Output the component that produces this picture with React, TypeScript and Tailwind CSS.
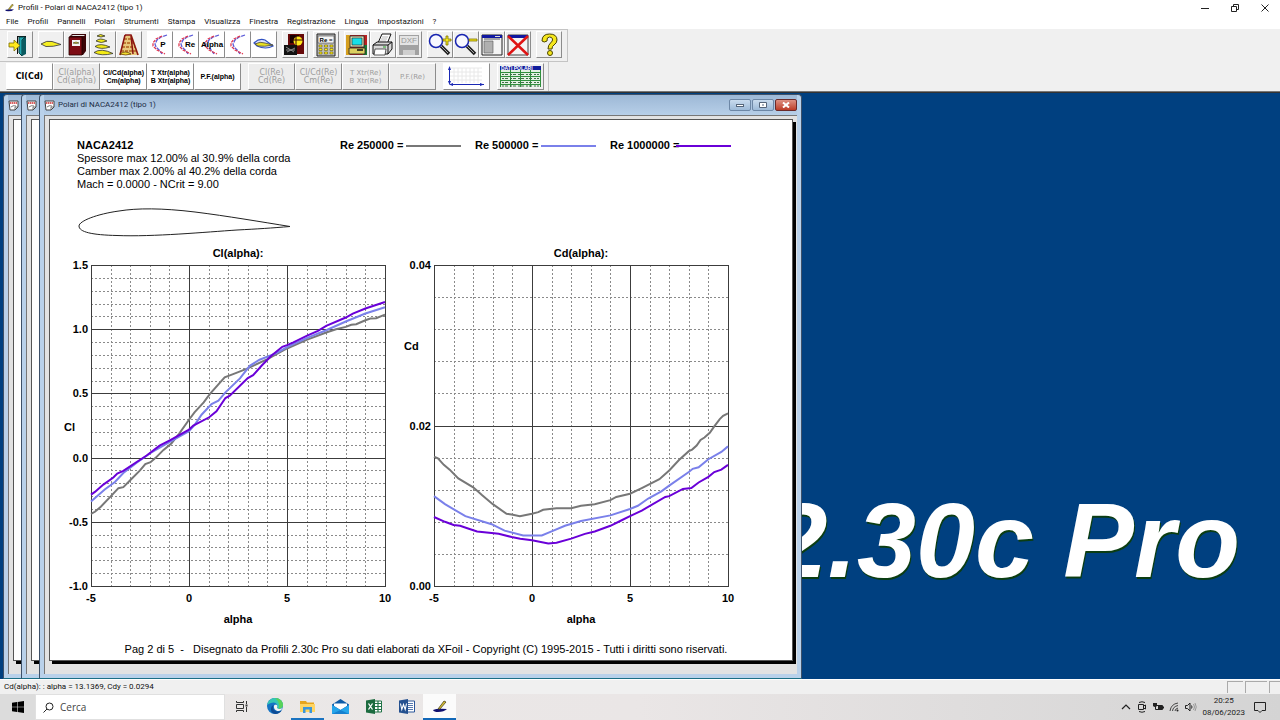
import React from 'react';

type Point = [number, number];

const curveColors = ['#777777', '#7a80ea', '#6a00d8'];

const clCurves: Point[][] = [
  [[-5, -0.438], [-4.8, -0.422], [-4.5, -0.383], [-4.03, -0.308], [-3.6, -0.238], [-3.35, -0.23], [-3, -0.176], [-2.5, -0.1], [-2.23, -0.05], [-1.96, -0.036], [-1.69, 0], [-1.3, 0.06], [-0.9, 0.11], [-0.5, 0.187], [0, 0.295], [0.28, 0.352], [0.75, 0.43], [1.06, 0.495], [1.5, 0.57], [1.82, 0.625], [2.25, 0.65], [3, 0.695], [4, 0.767], [5, 0.85], [6, 0.917], [7, 0.974], [7.5, 1], [8, 1.018], [8.28, 1.034], [8.53, 1.039], [9, 1.07], [9.25, 1.083], [9.55, 1.085], [10, 1.114]],
  [[-5, -0.342], [-4.3, -0.249], [-3.78, -0.19], [-3.35, -0.12], [-2.67, -0.04], [-1.96, 0.036], [-0.98, 0.122], [0, 0.205], [0.3, 0.257], [0.64, 0.334], [1.15, 0.417], [1.5, 0.443], [1.86, 0.508], [2.6, 0.617], [3.1, 0.715], [3.6, 0.762], [4.46, 0.813], [5, 0.86], [6, 0.93], [7, 0.992], [8, 1.06], [9, 1.122], [10, 1.171]],
  [[-5, -0.288], [-4.8, -0.267], [-4.37, -0.21], [-3.86, -0.155], [-3.66, -0.124], [-3.35, -0.104], [-2.67, -0.034], [-2.16, 0.016], [-1.5, 0.093], [-0.98, 0.135], [0, 0.218], [0.22, 0.249], [1.03, 0.314], [1.4, 0.36], [1.86, 0.464], [2.08, 0.482], [3, 0.619], [3.27, 0.642], [3.7, 0.715], [4.2, 0.793], [4.76, 0.863], [5, 0.876], [5.3, 0.896], [6, 0.948], [6.58, 0.987], [7, 1.026], [8, 1.091], [8.36, 1.122], [9, 1.161], [10, 1.212]],
];

const cdCurves: Point[][] = [
  [[-5, 0.0161], [-4.8, 0.0159], [-4.5, 0.0151], [-4.2, 0.0145], [-3.76, 0.0134], [-3, 0.0123], [-2.54, 0.0113], [-2, 0.0102], [-1.3, 0.009], [-1.04, 0.0089], [-0.62, 0.0087], [0, 0.009], [0.32, 0.0092], [0.57, 0.0095], [1.25, 0.0097], [2, 0.0097], [2.5, 0.01], [3.2, 0.0102], [4, 0.0107], [4.3, 0.0111], [5, 0.0115], [5.6, 0.0122], [6.5, 0.0133], [7, 0.0144], [7.5, 0.0157], [8, 0.0168], [8.17, 0.017], [8.4, 0.0175], [8.6, 0.0182], [8.8, 0.0185], [9.07, 0.0191], [9.3, 0.0199], [9.58, 0.0208], [9.75, 0.0212], [10, 0.0215]],
  [[-5, 0.0112], [-4.44, 0.0102], [-3.4, 0.0087], [-2.06, 0.0077], [-1.4, 0.0069], [-0.45, 0.0063], [0.5, 0.0063], [1, 0.0068], [1.68, 0.0075], [2.5, 0.0081], [4, 0.0088], [5, 0.0096], [5.4, 0.01], [5.93, 0.0109], [6.6, 0.0118], [7, 0.0125], [8, 0.0142], [8.2, 0.0146], [8.5, 0.0148], [9, 0.0158], [9.66, 0.0167], [10, 0.0174]],
  [[-5, 0.0086], [-4.44, 0.008], [-4, 0.0076], [-3.67, 0.0075], [-3.3, 0.0072], [-2.8, 0.0068], [-1.7, 0.0065], [-1.04, 0.0061], [-0.6, 0.0059], [0, 0.0057], [0.83, 0.0053], [1.25, 0.0054], [2, 0.0059], [2.7, 0.0065], [3.2, 0.0068], [4, 0.0075], [4.5, 0.0081], [5, 0.0087], [5.6, 0.0094], [6.8, 0.0111], [7, 0.0112], [7.7, 0.0121], [8.13, 0.0122], [8.5, 0.0129], [9, 0.0136], [9.3, 0.0142], [9.66, 0.0145], [10, 0.0151]],
];

interface ChartProps {
  title: string;
  axis: string;
  axisX: number;
  axisY: number;
  min: number;
  max: number;
  major: number;
  minor: number;
  digits: number;
  curves: Point[][];
}

const Chart: React.FC<ChartProps> = ({ title, axis, axisX, axisY, min, max, major, minor, digits, curves }) => {
  const left = 34;
  const top = 22;
  const width = 294;
  const height = 321;
  const px = (a: number) => left + ((a + 5) / 15) * width;
  const py = (v: number) => top + ((max - v) / (max - min)) * height;
  const snap = (n: number) => Math.round(n) + 0.5;
  const range = (from: number, to: number, step: number) =>
    Array.from({ length: Math.round((to - from) / step) + 1 }, (_, i) => from + i * step);

  return (
    <svg
      width="343"
      height="388"
      viewBox="0 0 343 388"
      role="img"
      aria-label={title}
      className="shrink-0 font-['Liberation_Sans',sans-serif] text-[11px] font-bold"
    >
      <text x={left + width / 2} y="14" textAnchor="middle">{title}</text>
      <g stroke="#8a8a8a" strokeWidth="1" strokeDasharray="2 2">
        {range(-5, 10, 1).map((a) => (
          <line key={a} x1={snap(px(a))} x2={snap(px(a))} y1={top} y2={top + height} />
        ))}
        {range(min, max, minor).map((v) => (
          <line key={v} x1={left} x2={left + width} y1={snap(py(v))} y2={snap(py(v))} />
        ))}
      </g>
      <g stroke="#3c3c3c" strokeWidth="1">
        {range(-5, 10, 5).map((a) => (
          <line key={a} x1={snap(px(a))} x2={snap(px(a))} y1={top} y2={top + height + 1} />
        ))}
        {range(min, max, major).map((v) => (
          <line key={v} x1={left} x2={left + width + 1} y1={snap(py(v))} y2={snap(py(v))} />
        ))}
      </g>
      {curves.map((curve, i) => (
        <polyline
          key={i}
          points={curve.map(([a, v]) => `${px(a)},${py(v)}`).join(' ')}
          fill="none"
          stroke={curveColors[i]}
          strokeWidth="2"
        />
      ))}
      {range(min, max, major).map((v) => (
        <text key={v} x={left - 3} y={Math.round(py(v)) + 4} textAnchor="end">{v.toFixed(digits)}</text>
      ))}
      {range(-5, 10, 5).map((a) => (
        <text key={a} x={px(a)} y={top + height + 16} textAnchor="middle">{a}</text>
      ))}
      <text x={left + width / 2} y={top + height + 37} textAnchor="middle">alpha</text>
      <text x={axisX} y={axisY}>{axis}</text>
    </svg>
  );
};

const Icon: React.FC<{ children: React.ReactNode }> = ({ children }) => (
  <svg width="24" height="24" viewBox="0 0 24 24" aria-hidden="true">{children}</svg>
);

const Polar = () => (
  <g fill="none" strokeWidth="1.3">
    <path d="M19 2 L13 4 L9 7 L7 11 L8 14 L12 18 L14 21" stroke="#5a5ad8" strokeDasharray="4 1" />
    <path d="M14 3 L8 6 L5 10 L5 13 L9 17 L17 21" stroke="#e03850" strokeDasharray="3 1" />
  </g>
);

const PolarLabel: React.FC<{ text: string; x: number }> = ({ text, x }) => (
  <Icon>
    <Polar />
    <text x={x} y="14" textAnchor="middle" className="font-['Liberation_Sans',sans-serif] text-[8px] font-bold">{text}</text>
  </Icon>
);

const DoorIcon = () => (
  <Icon>
    <path d="M9 3h9v18H9z" fill="#111" />
    <path d="M10 4h6v17h-6z" fill="#fff" />
    <path d="M11 4h6l-3 3v16l-3-3z" fill="#20a8b0" stroke="#053c40" strokeWidth="1" />
    <path d="M14 7l4-3v17l-4 2z" fill="#0b5a60" />
    <path d="M1 10h5V7l6 5.5L6 18v-4H1z" fill="#ffe91c" stroke="#7b6c00" strokeWidth=".8" />
  </Icon>
);

const FoilIcon = () => (
  <Icon>
    <path d="M2 11 Q8 7 13 8.5 L22 11.5 Q14 14 7 13.5 Z" fill="#f5ee20" stroke="#444" strokeWidth=".9" />
  </Icon>
);

const BookIcon = () => (
  <Icon>
    <path d="M4 4l3-3h14v17l-3 4H4z" fill="#3c0508" />
    <path d="M6 3h13l1-1H8z" fill="#e6e6e6" />
    <path d="M4 4h13v18H4z" fill="#7d0c14" stroke="#220000" strokeWidth=".8" />
    <path d="M7 7h8v6H7z" fill="#f5f5f5" />
    <path d="M8 10q3-2 6 0q-3 1-6 0z" fill="#e8d820" stroke="#222" strokeWidth=".5" />
  </Icon>
);

const FoilStackIcon = () => (
  <Icon>
    <g fill="#f3ea14" stroke="#333" strokeWidth=".8">
      <path d="M6 3q3-3 8 0q-4 2-8 0z" />
      <path d="M5 8q4-4 11 0q-6 3-11 0z" />
      <path d="M4 13.500q5-4 15 .5q-9 3-15-.5z" />
      <path d="M3 19.500q7-5 19 1q-12 3-19-1z" />
    </g>
  </Icon>
);

const WingIcon = () => (
  <Icon>
    <path d="M8 2h7l7 20H2z" fill="#e8c87c" />
    <path d="M4 18h15M5 14h13M6 10h11M7 6h9" stroke="#b0601c" strokeWidth="1.5" strokeDasharray="3 1" />
    <path d="M8 2L3 22M8 2h6l7 20M14 3l2 18" fill="none" stroke="#8a1414" strokeWidth="1.5" />
    <path d="M3 21q5-4 11 0q-5 2-11 0z" fill="#f0dc30" stroke="#5b3000" strokeWidth=".7" />
  </Icon>
);

const CompareIcon = () => (
  <Icon>
    <path d="M2 10Q7 5 13 7L21 13Q14 17 5 13Z" fill="#dfe4ff" stroke="#3050c0" strokeWidth="1.2" />
    <path d="M3 11Q8 8 13 10L21 12Q12 14 6 13Z" fill="#e8e020" stroke="#444" strokeWidth=".8" />
  </Icon>
);

const PresentIcon = () => (
  <Icon>
    <path d="M5 1h16v20H5z" fill="#650808" />
    <path d="M7 2h9v8H7z" fill="#180000" />
    <circle cx="15" cy="8" r="4.5" fill="#ffe818" />
    <path d="M13 2v10M8 7h12" stroke="#350505" strokeWidth="1" />
    <path d="M1 12h13v10H1z" fill="#111" />
    <path d="M3 14l8 5M4 19l8-4M3 17h9" stroke="#888" strokeWidth="1" />
  </Icon>
);

const CalcIcon = () => (
  <Icon>
    <path d="M3 1h18v22H3z" fill="#bdbdbd" stroke="#222" strokeWidth="1" />
    <path d="M4 3h16v7H4z" fill="#f5f5f5" stroke="#444" strokeWidth=".6" />
    <text x="12" y="9" textAnchor="middle" className="font-['Liberation_Sans',sans-serif] text-[6px] font-bold">Re =</text>
    <path d="M5 12h3v2H5zM10.500 12h3v2h-3zM16 12h3v2h-3zM5 15.500h3v2H5zM10.500 15.500h3v2h-3zM16 15.500h3v2h-3zM5 19h3v2H5zM10.500 19h3v2h-3zM16 19h3v2h-3z" fill="#ffee1a" stroke="#554a00" strokeWidth=".5" />
  </Icon>
);

const ComputerIcon = () => (
  <Icon>
    <path d="M1 2h21v20H1z" fill="#b92020" />
    <path d="M1 2h4v20H1z" fill="#d6a020" />
    <path d="M18 12h4v10h-4z" fill="#1c7a35" />
    <path d="M5 3h14v11H5z" fill="#dcdcb4" stroke="#222" strokeWidth=".8" />
    <path d="M7 5h10v7H7z" fill="#18e0e8" stroke="#222" strokeWidth=".6" />
    <path d="M4 15h16v6H4z" fill="#dccf60" stroke="#222" strokeWidth=".8" />
    <path d="M12 17h6" stroke="#111" strokeWidth="1.5" />
  </Icon>
);

const PrinterIcon = () => (
  <Icon>
    <path d="M7 10L11 1h9l-4 10z" fill="#fff" stroke="#111" strokeWidth="1" />
    <path d="M11 4h6M10 6h6M9 8h6" stroke="#999" strokeWidth=".7" />
    <path d="M2 12l4-3h15v7l-4 5H2z" fill="#d8d8d8" stroke="#111" strokeWidth="1" />
    <path d="M2 12h15v9M17 12l4-3" fill="none" stroke="#111" strokeWidth="1" />
    <path d="M4 16h11l-1 6H3z" fill="#fff" stroke="#333" strokeWidth=".8" />
    <path d="M12 14h3" stroke="#20a020" strokeWidth="1" />
  </Icon>
);

const DxfIcon = () => (
  <Icon>
    <path d="M2 2h20v20H2z" fill="#a2a2a2" />
    <path d="M3 3h18v9H3z" fill="#e4e4e4" />
    <path d="M6 17h12v5H6z" fill="#cfcfcf" />
    <text x="12" y="10" textAnchor="middle" fill="#999" className="font-['Liberation_Sans',sans-serif] text-[8px]">DXF</text>
  </Icon>
);

const ZoomIcon: React.FC<{ plus?: boolean }> = ({ plus }) => (
  <Icon>
    <path d="M13 13l8 8" stroke="#222" strokeWidth="3.500" />
    <path d="M13 13l7 7" stroke="#aaa" strokeWidth="1" />
    <circle cx="8" cy="8" r="6.500" fill="#f8f8ff" stroke="#1824b0" strokeWidth="1.500" />
    <path d={plus ? 'M15 6h3V3h2v3h3v2h-3v4h-2V8h-3z' : 'M15 6h8v2h-8z'} fill="#f3e71c" stroke="#807400" strokeWidth=".8" />
  </Icon>
);

const WindowIcon = () => (
  <Icon>
    <path d="M2 2h20v20H2z" fill="#f4f4f4" stroke="#222" strokeWidth="1" />
    <path d="M2 2h20v3H2z" fill="#1018a0" />
    <path d="M4 8h9v12H4z" fill="#b0b0b0" stroke="#555" strokeWidth=".6" />
    <path d="M4 6h16" stroke="#555" strokeWidth="1" />
    <path d="M15 3.500h5" stroke="#ddd" strokeWidth="1" />
  </Icon>
);

const CloseAllIcon = () => (
  <Icon>
    <path d="M2 2h20v20H2z" fill="#f4f4f4" stroke="#444" strokeWidth="1" />
    <path d="M2 2h20v3H2z" fill="#1018a0" />
    <path d="M2 3l20 19M22 3L2 22" stroke="#e01414" strokeWidth="2.500" />
  </Icon>
);

const HelpIcon = () => (
  <Icon>
    <path d="M5 8Q5 1 12.500 1Q20 1 20 7Q20 10 17 12Q15 13 15 16H11Q11 12 13.500 10Q16 8 15.500 6Q15 4 12.500 4Q9.500 4 10 8Q7 10 5 8z" fill="#f5e61c" stroke="#4a4500" strokeWidth="1" />
    <circle cx="13" cy="20" r="2.500" fill="#f5e61c" stroke="#4a4500" strokeWidth="1" />
  </Icon>
);

const mainTools: { label: string; icon: React.ReactNode; white?: boolean; disabled?: boolean }[][] = [
  [{ label: 'Esci', icon: <DoorIcon /> }],
  [
    { label: 'Profilo', icon: <FoilIcon /> },
    { label: 'Archivio', icon: <BookIcon /> },
    { label: 'Serie di profili', icon: <FoilStackIcon /> },
    { label: 'Centine', icon: <WingIcon /> },
  ],
  [
    { label: 'Polari', icon: <PolarLabel text="P" x={15} />, white: true },
    { label: 'Polari per Re', icon: <PolarLabel text="Re" x={16} />, white: true },
    { label: 'Polari per alpha', icon: <PolarLabel text="Alpha" x={12} />, white: true },
    { label: 'Polare', icon: <Icon><Polar /></Icon>, white: true },
    { label: 'Confronta', icon: <CompareIcon />, white: true },
  ],
  [{ label: 'Presentazione', icon: <PresentIcon /> }],
  [{ label: 'Calcola Re', icon: <CalcIcon /> }],
  [
    { label: 'Schermo', icon: <ComputerIcon /> },
    { label: 'Stampa', icon: <PrinterIcon /> },
    { label: 'Esporta DXF', icon: <DxfIcon />, disabled: true },
  ],
  [
    { label: 'Ingrandisci', icon: <ZoomIcon plus /> },
    { label: 'Riduci', icon: <ZoomIcon /> },
    { label: 'Finestra', icon: <WindowIcon /> },
    { label: 'Chiudi tutto', icon: <CloseAllIcon /> },
  ],
  [{ label: 'Aiuto', icon: <HelpIcon /> }],
];

const toolBorder = 'border border-t-white border-l-white border-r-[#8c8c8c] border-b-[#8c8c8c]';

const graphTools = [
  [
    { lines: ['Cl(Cd)'], style: "bg-white text-black font-bold text-[8px] font-['DejaVu_Sans',sans-serif]" },
    { lines: ['Cl(alpha)', 'Cd(alpha)'], style: "bg-[#ececec] text-[#9c9c9c] text-[8px] font-['DejaVu_Sans',sans-serif]", disabled: true },
    { lines: ['Cl/Cd(alpha)', 'Cm(alpha)'], style: "bg-white text-black font-bold text-[7px] font-['Liberation_Sans',sans-serif]" },
    { lines: ['T Xtr(alpha)', 'B Xtr(alpha)'], style: "bg-white text-black font-bold text-[7px] font-['Liberation_Sans',sans-serif]" },
    { lines: ['P.F.(alpha)'], style: "bg-white text-black font-bold text-[7px] font-['Liberation_Sans',sans-serif]" },
  ],
  [
    { lines: ['Cl(Re)', 'Cd(Re)'], style: "bg-[#ececec] text-[#9c9c9c] text-[8px] font-['DejaVu_Sans',sans-serif]", disabled: true },
    { lines: ['Cl/Cd(Re)', 'Cm(Re)'], style: "bg-[#ececec] text-[#9c9c9c] text-[8px] font-['DejaVu_Sans',sans-serif]", disabled: true },
    { lines: ['T Xtr(Re)', 'B Xtr(Re)'], style: "bg-[#ececec] text-[#9c9c9c] text-[7px] font-['DejaVu_Sans',sans-serif]", disabled: true },
    { lines: ['P.F.(Re)'], style: "bg-[#ececec] text-[#9c9c9c] text-[7px] font-['DejaVu_Sans',sans-serif]", disabled: true },
  ],
];

const Toolbars: React.FC = () => (
  <div className="bg-[#f0f0f0] border-b border-[#777]">
    <div className="flex">
      <div className="flex gap-[5px] border-t border-r border-b border-[#c4c4c4] pt-px pb-[3px] pr-[5px] pl-[7px]">
        {mainTools.map((group, i) => (
          <div key={i} className="flex">
            {group.map((tool) => (
              <button
                key={tool.label}
                type="button"
                aria-label={tool.label}
                disabled={tool.disabled}
                className={`flex h-[27px] w-[26px] items-center justify-center ${toolBorder} ${tool.white ? 'bg-white' : 'bg-[#f0f0f0]'}`}
              >
                {tool.icon}
              </button>
            ))}
          </div>
        ))}
      </div>
    </div>
    <div className="flex">
      <div className="flex gap-[7px] border-r border-[#c4c4c4] pt-px pb-px pr-1 pl-1.5">
        {graphTools.map((group, i) => (
          <div key={i} className="flex">
            {group.map((tool) => (
              <button
                key={tool.lines[0]}
                type="button"
                disabled={tool.disabled}
                className={`flex h-[27px] w-[47px] flex-col items-center justify-center overflow-hidden leading-[8px] whitespace-nowrap ${toolBorder} ${tool.style}`}
              >
                {tool.lines.map((line) => (
                  <span key={line}>{line}</span>
                ))}
              </button>
            ))}
          </div>
        ))}
        <button type="button" aria-label="Assi" className={`flex h-[27px] w-[47px] items-center justify-center bg-white ${toolBorder}`}>
          <svg width="43" height="23" viewBox="0 0 43 23" aria-hidden="true">
            <path d="M9 3v15M13 3v15M17 3v15M21 3v15M25 3v15M29 3v15M33 3v15M5 3h32M5 7h32M5 11h32M5 15h32" stroke="#e8e8e8" strokeWidth="1" />
            <path d="M4.500 3v15M6 19.500h33" stroke="#1a28b4" strokeWidth="1" />
            <path d="M3 5l1.500-4L6 5zM3 16l1.500 4L6 16zM8 18l-4 1.500L8 21zM35 18l4 1.500L35 21z" fill="#1a28b4" />
          </svg>
        </button>
        <button type="button" aria-label="Dati polari" className={`flex h-[27px] w-[47px] items-center justify-center bg-[#f0f0f0] ${toolBorder}`}>
          <svg width="43" height="23" viewBox="0 0 43 23" aria-hidden="true">
            <path d="M1 1h41v21H1z" fill="#e3f1e3" />
            <path d="M1 1h41v4H1z" fill="#101c9c" />
            <text x="2" y="5" fill="#fff" className="font-['Liberation_Sans',sans-serif] text-[5px] font-bold">DATI POLARI</text>
            <path d="M1 7.500h41M1 11.500h41M1 15.500h41M1 19.500h41M1.500 5v17M11.500 5v17M21.500 5v17M31.500 5v17M41.500 5v17" stroke="#2f8f3c" strokeWidth="1" />
            <path d="M3 9.500h37M3 13.500h37M3 17.500h37M3 21h37" stroke="#3f7048" strokeWidth="1" strokeDasharray="2 1 3 2" />
          </svg>
        </button>
      </div>
    </div>
  </div>
);

const PageIcon = () => (
  <svg width="11" height="11" viewBox="0 0 11 11" aria-hidden="true" className="shrink-0">
    <path d="M1 1h9v6l-3 3H2z" fill="#fff" stroke="#444" strokeWidth="1" />
    <path d="M2 3h7" stroke="#d86060" strokeWidth="2" strokeDasharray="1.500 .5" />
    <path d="M3 7q2-2 5-1M7 10V7h3" fill="none" stroke="#555" strokeWidth=".8" />
  </svg>
);

const ChildWindow: React.FC<{ place: string; title?: string; children?: React.ReactNode }> = ({ place, title, children }) => (
  <section
    className={`absolute top-px bottom-0 flex w-[763px] flex-col rounded-t-[4px] border border-[#3d5068] border-b-[#1b6f86] bg-[#b9d1ea] px-1 pb-1 ${place}`}
  >
    <header className="flex h-5 shrink-0 items-center gap-[3px] bg-gradient-to-b from-[#9db8d6] to-[#b7cfe8] text-[8px]">
      <PageIcon />
      <h2 className="text-[#1c2c44]">{title}</h2>
      {title && (
        <div className="ml-auto flex gap-px">
          <button type="button" aria-label="Riduci a icona" className="flex h-3 w-[22px] items-center justify-center rounded-[2px] border border-[#6d87a6] bg-gradient-to-b from-[#c9dbee] to-[#9dbad8]">
            <span className="h-[3px] w-2 border border-[#55657a] bg-white" />
          </button>
          <button type="button" aria-label="Ingrandisci finestra" className="flex h-3 w-[22px] items-center justify-center rounded-[2px] border border-[#6d87a6] bg-gradient-to-b from-[#c9dbee] to-[#9dbad8]">
            <svg width="8" height="6" viewBox="0 0 8 6" aria-hidden="true">
              <path d="M.5 .5h7v5h-7z" fill="#fff" stroke="#55657a" />
              <path d="M3 2.500h2v1H3z" fill="#55657a" />
            </svg>
          </button>
          <button type="button" aria-label="Chiudi finestra" className="flex h-3 w-[22px] items-center justify-center rounded-[2px] border border-[#6b2a2a] bg-gradient-to-b from-[#dd8f82] to-[#bc3a26]">
            <svg width="8" height="6" viewBox="0 0 8 6" aria-hidden="true">
              <path d="M1 .5l6 5M7 .5l-6 5" stroke="#fff" strokeWidth="2" />
            </svg>
          </button>
        </div>
      )}
    </header>
    <div className="flex min-h-0 flex-1 border-t border-l border-[#777] bg-[#e2e2e2] pt-[3px] pr-1 pb-[13px] pl-1">
      <div className="min-w-0 flex-1 border border-[#555] bg-white shadow-[3px_3px_0_#000]">{children}</div>
    </div>
  </section>
);

const legend = [
  { label: 'Re 250000 =', color: 'bg-[#777777]' },
  { label: 'Re 500000 =', color: 'bg-[#7a80ea]' },
  { label: 'Re 1000000 =', color: 'bg-[#6a00d8]' },
];

const PolarPage: React.FC = () => (
  <article className="flex h-full flex-col overflow-hidden pt-[19px] font-['Liberation_Sans',sans-serif] text-[11px] leading-[13px] text-black">
    <div className="flex pl-[27px]">
      <div className="w-[263px] shrink-0 whitespace-nowrap">
        <h1 className="font-bold">NACA2412</h1>
        <p>Spessore max 12.00% al 30.9% della corda</p>
        <p>Camber max 2.00% al 40.2% della corda</p>
        <p>Mach = 0.0000 - NCrit = 9.00</p>
      </div>
      <ul className="flex font-bold">
        {legend.map((item) => (
          <li key={item.label} className="flex h-[13px] w-[135px] items-center">
            <span className="w-[66px] whitespace-nowrap">{item.label}</span>
            <span className={`h-0.5 w-[55px] ${item.color}`} />
          </li>
        ))}
      </ul>
    </div>
    <svg width="216" height="32" viewBox="0 0 216 32" aria-hidden="true" className="mt-4 ml-[27px] shrink-0">
      <path
        d="M213 19.500 C185 15 150 9 118 5 C85 1 60 1 42 4 C20 7 2 14 2 19 C2 25 15 28 40 28.500 C75 30 130 25 160 23 C180 22 195 21 213 19.500Z"
        fill="none"
        stroke="#222"
        strokeWidth="1"
      />
    </svg>
    <div className="mt-1 flex pl-[7px]">
      <Chart title="Cl(alpha):" axis="Cl" axisX={7} axisY={188} min={-1} max={1.5} major={0.5} minor={0.1} digits={1} curves={clCurves} />
      <Chart title="Cd(alpha):" axis="Cd" axisX={4} axisY={107} min={0} max={0.04} major={0.02} minor={0.004} digits={2} curves={cdCurves} />
    </div>
    <p className="mt-3 pl-2.5 text-center whitespace-pre">
      {'Pag 2 di 5  -   Disegnato da Profili 2.30c Pro su dati elaborati da XFoil - Copyright (C) 1995-2015 - Tutti i diritti sono riservati.'}
    </p>
  </article>
);

const menus = ['File', 'Profili', 'Pannelli', 'Polari', 'Strumenti', 'Stampa', 'Visualizza', 'Finestra', 'Registrazione', 'Lingua', 'Impostazioni', '?'];

const PenIcon: React.FC<{ size: string }> = ({ size }) => (
  <svg viewBox="0 0 16 14" aria-hidden="true" className={size}>
    <path d="M1 11q4-2 14-1q-3 3-9 3q-4 0-5-2z" fill="#101070" />
    <path d="M6 10l6-8 2 1-6 7z" fill="#d8c030" stroke="#4b4420" strokeWidth=".8" />
  </svg>
);

const TitleBar: React.FC = () => (
  <header className="flex h-[15px] shrink-0 items-center bg-white pl-1">
    <PenIcon size="h-[9px] w-[11px]" />
    <span className="ml-[3px]">Profili - Polari di NACA2412 (tipo 1)</span>
    <div className="ml-auto flex">
      <button type="button" aria-label="Riduci a icona" className="flex h-[15px] w-[30px] items-center justify-center">
        <svg width="8" height="8" viewBox="0 0 8 8"><path d="M0 4.500h8" stroke="#222" /></svg>
      </button>
      <button type="button" aria-label="Ripristina" className="flex h-[15px] w-[30px] items-center justify-center">
        <svg width="8" height="8" viewBox="0 0 8 8"><path d="M.5 2.500h5v5h-5zM2.500 2.500v-2h5v5h-2" fill="none" stroke="#222" /></svg>
      </button>
      <button type="button" aria-label="Chiudi" className="flex h-[15px] w-[30px] items-center justify-center">
        <svg width="8" height="8" viewBox="0 0 8 8"><path d="M.5 .5l7 7M7.500 .5l-7 7" stroke="#222" /></svg>
      </button>
    </div>
  </header>
);

const TaskButton: React.FC<{ label: string; className?: string; children: React.ReactNode }> = ({ label, className = '', children }) => (
  <button type="button" aria-label={label} className={`flex w-[33px] items-center justify-center border-b-2 ${className || 'border-transparent'}`}>
    {children}
  </button>
);

const Taskbar: React.FC = () => (
  <footer className="flex h-[26px] shrink-0 bg-gradient-to-r from-[#ebe9e8] via-[#eae6e6] to-[#d4d4d4]">
    <button type="button" aria-label="Start" className="flex w-[35px] items-center justify-center bg-[#dcdcdc]">
      <svg width="12" height="12" viewBox="0 0 12 12" aria-hidden="true">
        <path d="M0 1.700l5-.7v4.700H0zM5.600 .9L12 0v5.700H5.600zM0 6.300h5V11l-5-.7zM5.600 6.300H12V12l-6.400-.9z" fill="#000" />
      </svg>
    </button>
    <label className="flex w-[190px] items-center border border-[#e0e0e0] bg-white pl-[7px]">
      <svg width="11" height="11" viewBox="0 0 11 11" aria-hidden="true">
        <path d="M4 7L.5 10.500" stroke="#222" />
        <circle cx="6.500" cy="4.500" r="3.500" fill="none" stroke="#222" />
      </svg>
      <input type="search" aria-label="Cerca" placeholder="Cerca" className="ml-1.5 w-32 font-['Open_Sans',sans-serif] text-[10px] outline-none placeholder:text-[#444]" />
    </label>
    <div className="flex">
      <TaskButton label="Visualizzazione attività">
        <svg width="12" height="11" viewBox="0 0 12 11" aria-hidden="true">
          <path d="M.5 3.500h7v4h-7zM.5 0v1.500h7V0M.5 11V9.500h7V11M10.500 0v3M10.500 6v5" fill="none" stroke="#333" />
          <path d="M9.500 3.500h2v2h-2z" fill="#333" />
        </svg>
      </TaskButton>
      <TaskButton label="Edge">
        <svg width="16" height="16" viewBox="0 0 16 16" aria-hidden="true">
          <circle cx="8" cy="8" r="8" fill="#1574c4" />
          <path d="M.2 7C1 2.500 4.500 0 8 0c4.500 0 8 3 8 7c0 3-3 4-5.500 3.500c-1-.3-1-1 0-2C10.500 5 7 3.500 4 5C2 5.700 1 6.500 .2 7z" fill="#35c6b4" />
          <path d="M8 0c4.500 0 8 3 8 7c0 2.500-2 3.800-4.500 3.700C13 8 12 3 8 0z" fill="#59d25a" />
          <path d="M6.500 7C5 10 7 14 12 13.500l2.700-1C13 15 10 16.300 7 15.800C3 14.500 3 8.500 6.500 7z" fill="#0d4a94" />
          <path d="M7 8c0-1.500 3-2 3.400 0c0 1-1 1.500 0 2.300c1.500 1.200 4.500.5 5.400-1c-.3 2-2 3.700-4.500 3.700C8.500 13 6.500 10.500 7 8z" fill="#f3f3f3" />
        </svg>
      </TaskButton>
      <TaskButton label="Esplora file" className="border-[#1a73c0]">
        <svg width="15" height="13" viewBox="0 0 15 13" aria-hidden="true">
          <path d="M0 1h6l1 1.500h7V12H0z" fill="#e6a51e" />
          <path d="M0 4h15v8H0z" fill="#ffd563" />
          <path d="M3 7h9v6H9.500V9.500h-4V13H3z" fill="#3a96dc" />
        </svg>
      </TaskButton>
      <TaskButton label="Posta">
        <svg width="17" height="15" viewBox="0 0 17 15" aria-hidden="true">
          <path d="M0 5.500L8.500 0L17 5.500V15H0z" fill="#0e5ca8" />
          <path d="M2 4.500h13V7l-6.500 4L2 7z" fill="#fff" />
          <path d="M0 6l8.500 5L17 6v9H0z" fill="#25a5ea" />
          <path d="M0 15l8.500-4L17 15z" fill="#1580cf" />
        </svg>
      </TaskButton>
      <TaskButton label="Excel">
        <svg width="16" height="15" viewBox="0 0 16 15" aria-hidden="true">
          <path d="M8 2h7.500v11H8z" fill="#fff" stroke="#217346" />
          <path d="M9 4.500h6M9 7.500h6M9 10.500h6M12 2v11" stroke="#217346" strokeWidth="1.200" />
          <path d="M0 1.500L9 0v15l-9-1.500z" fill="#1c6b3f" />
          <path d="M2.500 4.500l4 6M6.500 4.500l-4 6" stroke="#fff" strokeWidth="1.300" />
        </svg>
      </TaskButton>
      <TaskButton label="Word">
        <svg width="16" height="15" viewBox="0 0 16 15" aria-hidden="true">
          <path d="M8 2h7.500v11H8z" fill="#fff" stroke="#2b579a" />
          <path d="M9 4.500h5M9 6.500h5M9 8.500h5M9 10.500h5" stroke="#2b579a" strokeWidth=".8" />
          <path d="M0 1.500L9 0v15l-9-1.500z" fill="#24508f" />
          <path d="M1.500 4.500l1.300 6l1.700-5l1.700 5l1.300-6" fill="none" stroke="#fff" strokeWidth="1.100" />
        </svg>
      </TaskButton>
      <TaskButton label="Profili" className="border-[#1268b8] bg-[#fbfbfb]">
        <PenIcon size="h-[14px] w-4" />
      </TaskButton>
    </div>
    <div className="ml-auto flex items-center gap-[5px] text-[#222]">
      <svg width="10" height="10" viewBox="0 0 10 10" aria-hidden="true"><path d="M1 7l4-4 4 4" fill="none" stroke="#222" strokeWidth="1.200" /></svg>
      <svg width="10" height="12" viewBox="0 0 10 12" aria-hidden="true" className="ml-px">
        <path d="M1.500 3.500h5v5h-5zM6.500 5l2-1v4l-2-1M2 1.500q3-1.500 6 0M2 10.500q3 1.500 6 0" fill="none" stroke="#222" />
      </svg>
      <svg width="12" height="10" viewBox="0 0 12 10" aria-hidden="true">
        <path d="M3.500 3.500h7v4h-7z" fill="none" stroke="#222" />
        <path d="M6 4h4v3H6zM1 1h4v3q-2 2-4 0zM11 4.500h1v2h-1z" fill="#222" />
      </svg>
      <svg width="11" height="10" viewBox="0 0 11 10" aria-hidden="true">
        <path d="M1 9Q2 2 9 1M3.500 9Q4 4.500 9 3.500M6 9q0-2 3-3" fill="none" stroke="#444" />
        <circle cx="8.500" cy="8.500" r="1" fill="#222" />
      </svg>
      <svg width="12" height="10" viewBox="0 0 12 10" aria-hidden="true">
        <path d="M.5 3.500h2l2.500-2.500v8L2.500 6.500h-2z" fill="none" stroke="#222" />
        <path d="M6.500 3.500q1 1.500 0 3" fill="none" stroke="#222" />
        <path d="M8.500 2q2 3 0 6M10 1q2.500 4 0 8" fill="none" stroke="#999" />
      </svg>
      <div className="text-center leading-3">
        <time className="block">20:25</time>
        <time className="block">08/06/2023</time>
      </div>
      <button type="button" aria-label="Notifiche" className="mr-3.5 ml-1 flex">
        <svg width="12" height="12" viewBox="0 0 12 12" aria-hidden="true">
          <path d="M.5 1.500h11v8H8l-2 2-2-2H.5z" fill="none" stroke="#222" />
        </svg>
      </button>
    </div>
  </footer>
);

export default function App() {
  return (
    <div className="flex h-screen flex-col overflow-hidden bg-[#f0f0f0] font-['Roboto',sans-serif] text-[8px] text-[#111]">
      <TitleBar />
      <nav className="flex h-[14px] shrink-0 items-center gap-[9px] bg-white pl-1.5">
        {menus.map((menu) => (
          <button key={menu} type="button">{menu}</button>
        ))}
      </nav>
      <Toolbars />
      <main className="relative min-h-0 flex-1 overflow-hidden border-t border-[#333] bg-[#004080]">
        <p className="absolute right-10 bottom-[79px] font-['Liberation_Sans',sans-serif] text-[106px] leading-[120px] font-bold whitespace-nowrap text-white italic [text-shadow:1px_2px_0_#0b3d12]">
          2.30c Pro
        </p>
        <ChildWindow place="left-[3px]" />
        <ChildWindow place="left-[21px]" />
        <ChildWindow place="left-[39px]" title="Polari di NACA2412 (tipo 1)">
          <PolarPage />
        </ChildWindow>
      </main>
      <div className="flex h-[15px] shrink-0 items-center border-t border-white bg-[#f0f0f0] pl-1" role="status">
        <span>Cd(alpha): : alpha = 13.1369, Cdy = 0.0294</span>
        <div className="ml-auto flex h-3 gap-0.5">
          <span className="w-4 border-t border-l border-[#aaa]" />
          <span className="w-[22px] border-t border-l border-[#aaa]" />
          <span className="w-[11px] border-t border-l border-[#aaa]" />
        </div>
      </div>
      <Taskbar />
    </div>
  );
}
